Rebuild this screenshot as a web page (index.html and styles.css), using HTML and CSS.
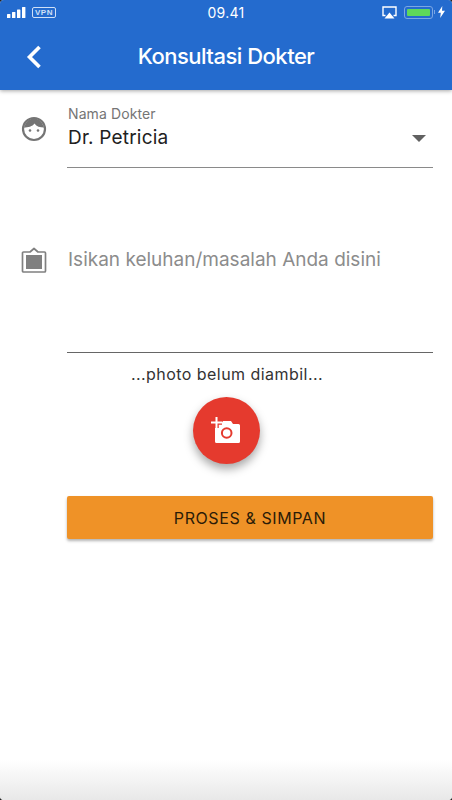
FILE: index.html
```html
<!DOCTYPE html>
<html lang="id">
  <head>
    <meta charset="UTF-8" />
    <meta name="viewport" content="width=device-width, initial-scale=1.0" />
    <title>Konsultasi Dokter</title>
    <link rel="stylesheet" href="styles.css">
  </head>
  <body>
    <div class="screen">
      <header class="appbar">
        <div class="status">
          <div class="status-left">
            <svg class="signal" width="20" height="11" viewBox="0 0 20 11">
              <rect x="0" y="7" width="3.4" height="4" rx="0.6" />
              <rect x="5" y="5" width="3.4" height="6" rx="0.6" />
              <rect x="10" y="2.5" width="3.4" height="8.5" rx="0.6" />
              <rect x="15" y="0" width="3.4" height="11" rx="0.6" />
            </svg>
            <span class="vpn">VPN</span>
          </div>
          <span class="clock">09.41</span>
          <div class="status-right">
            <svg width="15" height="13" viewBox="0 0 15 13">
              <path d="M3.5 9.5H1V1h13v8.500h-2.500" fill="none" stroke="#fff" stroke-width="1.400" />
              <path d="M7.500 6.500L12.500 12.500H2.500z" fill="#fff" />
            </svg>
            <div class="battery"><div class="battery-level"></div></div>
            <span class="battery-tip"></span>
            <svg width="7" height="12" viewBox="0 0 7 12">
              <path d="M4.300 0L0 6.800h2.800L2.200 12 7 4.800H4z" fill="#fff" />
            </svg>
          </div>
        </div>
        <div class="titlebar">
          <svg class="back" width="18" height="26" viewBox="0 0 18 26">
            <path d="M14.500 3L4.500 13l10 10" fill="none" stroke="#fff" stroke-width="3.600" />
          </svg>
          <h1>Konsultasi Dokter</h1>
        </div>
      </header>

      <main class="content">
        <div class="row row-doctor">
          <svg class="row-icon" width="26" height="26" viewBox="0 0 26 26">
            <circle cx="13" cy="13" r="11" fill="none" stroke="#757575" stroke-width="2.200" />
            <path d="M3 11.500C5 5 9 2.500 13 2.500S21 5 23 11.500C19 11.500 15.500 10.500 13.500 7.500 11.500 10.500 7 11.500 3 11.500z" fill="#757575" />
            <circle cx="9" cy="14.500" r="1.300" fill="#757575" />
            <circle cx="17" cy="14.500" r="1.300" fill="#757575" />
          </svg>
          <div class="field">
            <label class="field-label">Nama Dokter</label>
            <div class="select-value">
              <span>Dr. Petricia</span>
              <span class="caret"></span>
            </div>
          </div>
        </div>

        <div class="row row-complaint">
          <svg class="row-icon" width="26" height="26" viewBox="0 0 26 26">
            <path d="M2.500 5h6.500l4-3.500L17 5h6.500a1 1 0 0 1 1 1v18a1 1 0 0 1-1 1h-21a1 1 0 0 1-1-1V6a1 1 0 0 1 1-1z" fill="none" stroke="#808080" stroke-width="1.700" stroke-linejoin="round" />
            <rect x="5" y="8" width="16" height="14" fill="#808080" />
          </svg>
          <div class="field field-area">
            <span class="placeholder">Isikan keluhan/masalah Anda disini</span>
          </div>
        </div>

        <p class="photo-note">...photo belum diambil...</p>

        <button class="fab" type="button" aria-label="Tambah foto">
          <svg width="34" height="30" viewBox="0 0 34 30">
            <path d="M7.500 8h4.500l2-3h8l2 3h5.500a1.500 1.500 0 0 1 1.500 1.500v16a1.500 1.500 0 0 1-1.500 1.500H7.500A1.500 1.500 0 0 1 6 25.500V9.500A1.500 1.500 0 0 1 7.500 8z" fill="#fff" />
            <circle cx="17.700" cy="17" r="4.800" fill="none" stroke="#e53a2e" stroke-width="2" />
            <path d="M2 6.500h11M7.500 1v11" stroke="#e53a2e" stroke-width="4.500" />
            <path d="M2 6.500h11M7.500 1v11" stroke="#fff" stroke-width="2" />
          </svg>
        </button>

        <button class="submit" type="button">PROSES &amp; SIMPAN</button>
      </main>

      <div class="bottom-fade"></div>
    </div>
  </body>
</html>
```

FILE: styles.css
```css
* {
  box-sizing: border-box;
}

html,
body {
  margin: 0;
  height: 100%;
  background-color: #222;
}

body {
  font-family: Inter, Roboto, "Liberation Sans", sans-serif;
}

/* screen with slightly rounded device corners */
.screen {
  position: relative;
  display: flex;
  flex-direction: column;
  width: 452px;
  height: 800px;
  overflow: hidden;
  background-color: #fff;
  border-radius: 4px;
}

.appbar {
  height: 90px;
  flex-shrink: 0;
  background-color: #246bce;
  box-shadow: 0 1px 4px rgba(0, 0, 0, 0.35);
  color: #fff;
}

.status {
  display: flex;
  align-items: center;
  justify-content: space-between;
  height: 24px;
  padding: 0 7px 0 7px;
}

.status-left,
.status-right {
  display: flex;
  align-items: center;
  width: 150px;
}

.status-right {
  justify-content: flex-end;
}

.signal {
  fill: #fff;
  margin-right: 5px;
}

.vpn {
  padding: 0 2px;
  border: 1px solid #cfe0f7;
  border-radius: 2px;
  font-family: "Liberation Sans", sans-serif;
  font-size: 8px;
  font-weight: bold;
  line-height: 9px;
  letter-spacing: 0.5px;
  color: #cfe0f7;
}

.clock {
  font-size: 14px;
  letter-spacing: 0.3px;
}

.battery {
  width: 29px;
  height: 13px;
  margin-left: 7px;
  padding: 2px;
  border: 1px solid #7ba6e4;
  border-radius: 3px;
}

.battery-level {
  height: 100%;
  background-color: #5ed85a;
  border-radius: 1px;
}

.battery-tip {
  width: 1.500px;
  height: 4px;
  margin: 0 3px 0 1px;
  background-color: #7ba6e4;
}

.titlebar {
  position: relative;
  display: flex;
  align-items: center;
  justify-content: center;
  height: 66px;
}

.back {
  position: absolute;
  left: 25px;
  top: 20px;
}

.titlebar h1 {
  margin: 0 0 2px 0;
  font-size: 22px;
  font-weight: 500;
  letter-spacing: -0.5px;
}

.content {
  display: flex;
  flex-direction: column;
  padding: 0 19px 0 21px;
}

.row {
  display: flex;
}

.row-icon {
  flex-shrink: 0;
  margin-right: 20px;
}

.row-doctor {
  padding-top: 26px;
  height: 78px;
}

.row-complaint {
  margin-top: 77px;
}

.row-complaint .row-icon {
  margin-top: 2px;
}

.field {
  flex: 1;
  padding-left: 1px;
  border-bottom: 1px solid #8a8a8a;
}

.row-doctor .field {
  margin-top: -10px;
  height: 62px;
}

.field-label {
  display: block;
  font-size: 14px;
  line-height: 16px;
  letter-spacing: 0.1px;
  color: #757575;
}

.select-value {
  display: flex;
  align-items: center;
  justify-content: space-between;
  margin-top: 4px;
  padding-right: 7px;
  font-size: 19px;
  line-height: 24px;
  letter-spacing: 0.2px;
  color: #212121;
}

.caret {
  width: 0;
  height: 0;
  border-left: 7px solid transparent;
  border-right: 7px solid transparent;
  border-top: 7px solid #616161;
}

.field-area {
  height: 108px;
  padding-top: 1px;
  border-bottom-color: #666;
}

.placeholder {
  font-size: 19px;
  line-height: 28px;
  color: #8c8c8c;
}

.photo-note {
  margin: 11px 0 0 0;
  text-align: center;
  font-size: 16px;
  line-height: 20px;
  letter-spacing: 0.45px;
  color: #333;
}

.fab {
  display: flex;
  align-items: center;
  justify-content: center;
  align-self: center;
  width: 67px;
  height: 67px;
  margin: 13px 2px 0 0;
  padding: 0;
  border: none;
  border-radius: 50%;
  background-color: #e53a2e;
  box-shadow: 0 5px 10px rgba(0, 0, 0, 0.35);
}

.submit {
  height: 43px;
  margin: 32px 0 0 46px;
  border: none;
  border-radius: 2px;
  background-color: #ef9227;
  box-shadow: 0 2px 3px rgba(0, 0, 0, 0.3);
  font-family: inherit;
  font-size: 16px;
  letter-spacing: 0.6px;
  color: #2b1c08;
}

/* grey fade over the bottom of the screen */
.bottom-fade {
  position: absolute;
  left: 0;
  right: 0;
  bottom: 0;
  height: 40px;
  background: linear-gradient(rgba(232, 232, 232, 0), #e8e8e8);
}
```
